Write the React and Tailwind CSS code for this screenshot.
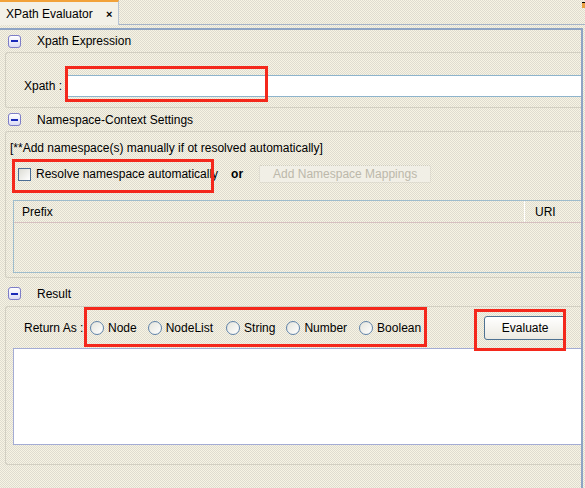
import React from "react";

function Minus() {
  return (
    <div className="w-[13px] h-[13px] rounded-[3px] border border-[#7d7dc8] bg-gradient-to-b from-white to-[#dcdcf4] flex items-center justify-center">
      <div className="w-[7px] h-[2px] bg-[#1a2ab8]" />
    </div>
  );
}

function Header({ title, h }) {
  return (
    <div className={`flex items-center pl-[8px] ${h}`}>
      <Minus />
      <span className="ml-[16px]">{title}</span>
    </div>
  );
}

function Radio({ label, gap }) {
  return (
    <div className={`flex items-center ${gap}`}>
      <div className="w-[14px] h-[14px] rounded-full border border-[#5f82a8] bg-gradient-to-br from-[#e4e4dc] to-white" />
      <span className="ml-[4px]">{label}</span>
    </div>
  );
}

const dither =
  "bg-[repeating-conic-gradient(#f7f4e4_0_25%,#dfdcd0_0_50%)] bg-[length:2px_2px]";

export default function App() {
  return (
    <div
      className={`relative w-[585px] h-[488px] overflow-hidden bg-[#ebe9de] ${dither} text-[12px] text-black`}
      style={{ fontFamily: '"Liberation Sans", Arial, sans-serif' }}
    >
      {/* tab bar */}
      <div className="flex h-[25px] border-b border-[#a6b4c8]">
        <div className="w-[119px] h-[25px] border-t-2 border-t-[#f2a23a] border-r border-r-[#b8c4d4] bg-[#f3f1e8] flex items-center pl-[6px] relative">
          <span>XPath Evaluator</span>
          <span className="absolute left-[106px] top-[4px] font-bold text-[11px]">×</span>
        </div>
        <div className="flex-1" />
        <div className="w-[3px] h-[6px] mt-[2px] bg-[#e8a040] border-t border-black" />
      </div>

      {/* content panel */}
      <div className="mt-[3px] mr-[2px] border-t-2 border-r-2 border-[#8ea4c4] h-[460px]">
        <Header title="Xpath Expression" h="h-[22px]" />
        {/* group 1 */}
        <div className="ml-[5px] h-[56px] border border-r-0 border-[#d2cfc2] rounded-l-[3px] flex items-center pt-[12px]">
          <span className="ml-[18px] w-[43px]">Xpath :</span>
          <div className="flex-1 h-[22px] bg-white border-t border-b border-[#8eb4cc]" />
        </div>

        <Header title="Namespace-Context Settings" h="h-[23px]" />
        {/* group 2 */}
        <div className="ml-[5px] h-[147px] border border-r-0 border-[#d2cfc2] rounded-l-[3px] flex flex-col">
          <div className="mt-[9px] ml-[4px] leading-[14px]">[**Add namespace(s) manually if ot resolved automatically]</div>
          <div className="flex items-center mt-[9px] h-[20px]">
            <div className="ml-[12px] w-[13px] h-[13px] border border-[#4b6d94] bg-gradient-to-br from-[#dcdcd4] to-white" />
            <span className="ml-[5px]">Resolve namespace automatically</span>
            <span className="ml-[13px] font-bold">or</span>
            <div className="ml-[16px] w-[172px] h-[18px] border border-dotted border-[#cfccbd] rounded-[2px] flex items-center justify-center text-[#bcb8aa] bg-[#f1efe6]">
              Add Namespace Mappings
            </div>
          </div>
          <div className="ml-[7px] mt-[16px] h-[73px] border border-r-0 border-[#9ebccc] flex flex-col">
            <div className="h-[22px] flex border-b border-[#d6c0c0]">
              <div className="w-[511px] pl-[8px] flex items-center border-r border-white">Prefix</div>
              <div className="flex-1 pl-[10px] flex items-center">URI</div>
            </div>
            <div className="flex-1" />
          </div>
        </div>

        <Header title="Result" h="h-[28px] pt-[3px]" />
        {/* group 3 */}
        <div className="ml-[5px] h-[159px] border border-r-0 border-[#d2cfc2] rounded-l-[3px] flex flex-col">
          <div className="flex items-center h-[41px]">
            <span className="ml-[18px] w-[66px]">Return As :</span>
            <Radio label="Node" gap="" />
            <Radio label="NodeList" gap="ml-[11px]" />
            <Radio label="String" gap="ml-[13px]" />
            <Radio label="Number" gap="ml-[11px]" />
            <Radio label="Boolean" gap="ml-[12px]" />
            <div className="ml-[63px] w-[82px] h-[24px] rounded-[3px] border border-[#4e7292] bg-gradient-to-b from-white to-[#eceae2] flex items-center justify-center">
              Evaluate
            </div>
          </div>
          <div className="ml-[7px] h-[97px] bg-white border border-r-0 border-[#a4acd4]" />
        </div>
      </div>

      {/* red annotation boxes */}
      <div className="absolute left-[65px] top-[66px] w-[203px] h-[36px] border-[3px] border-[#f4281c]" />
      <div className="absolute left-[12px] top-[159px] w-[202px] h-[34px] border-[3px] border-[#f4281c]" />
      <div className="absolute left-[84px] top-[307px] w-[343px] h-[40px] border-[3px] border-[#f4281c]" />
      <div className="absolute left-[474px] top-[309px] w-[92px] h-[42px] border-[3px] border-[#f4281c]" />
    </div>
  );
}
